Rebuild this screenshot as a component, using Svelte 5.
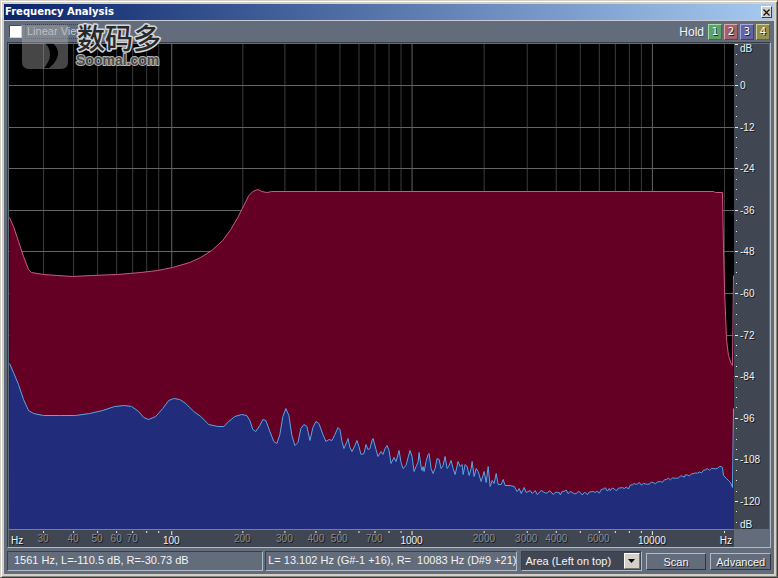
<script lang="ts">
  type Point = [number, number];

  // plot area in its own units, one unit per pixel at the default window size
  const W = 724;
  const H = 485;
  const DB_STEP = 3.4667;

  const snapped: Record<number, number> = { 30: 34, 40: 64, 50: 88, 60: 107, 70: 123, 80: 137, 90: 149, 200: 233, 300: 275 };

  const xOf = (hz: number) => snapped[hz] ?? 162 + 240 * Math.log10(hz / 100);
  const yOf = (db: number) => 41 - db * DB_STEP;
  const pct = (v: number, total: number) => `${((v / total) * 100).toFixed(3)}%`;

  const freqs = [1, 2, 3].flatMap(e => [1, 2, 3, 4, 5, 6, 7, 8, 9].map(m => m * 10 ** e))
    .filter(f => f > 22)
    .concat([10000, 20000]);
  const labelled = [30, 40, 50, 60, 70, 100, 200, 300, 400, 500, 700, 1000, 2000, 3000, 4000, 6000, 10000];
  const isDecade = (f: number) => Number.isInteger(+Math.log10(f).toFixed(6));

  const dbs = Array.from({ length: 11 }, (_, i) => -12 * i);
  const minor = Array.from({ length: 46 }, (_, i) => 9 - 3 * i).filter(d => d % 12 !== 0);

  const right: Point[] = [
    [0, 173], [4, 182], [9, 197], [14, 212], [19, 225], [22, 228], [34, 230], [48, 231], [63, 232], [82, 231],
    [108, 230], [131, 228], [148, 226], [163, 223], [180, 218], [191, 213], [202, 206], [213, 196], [221, 185],
    [228, 173], [234, 161], [239, 151], [243, 147], [248, 145], [252, 147], [257, 148], [262, 147],
    [703, 147], [705, 148], [712, 148], [713, 204], [714, 244], [716, 295], [718, 311], [721, 320], [722, 321], [723, 231]
  ];

  const left: Point[] = [
    [0, 319], [4, 328], [9, 340], [14, 355], [19, 366], [24, 369], [34, 371], [50, 371], [66, 371], [80, 369],
    [93, 366], [105, 362], [115, 361], [122, 362], [129, 367], [134, 373], [139, 375], [146, 372], [153, 364],
    [159, 356], [164, 354], [170, 355], [176, 359], [184, 367], [191, 372], [199, 380], [208, 382], [214, 382],
    [219, 377], [225, 372], [232, 370], [237, 371], [240, 376], [243, 385], [246, 387], [250, 381], [253, 375],
    [256, 376], [260, 387], [264, 397], [267, 399], [270, 390], [273, 372], [276, 364], [279, 371], [282, 391],
    [285, 401], [288, 398], [291, 384], [294, 380], [297, 382], [300, 396], [303, 383], [306, 377], [309, 379],
    [313, 390], [316, 397], [319, 395], [322, 396], [325, 390], [328, 383], [330, 385], [332, 397], [334, 404],
    [337, 397], [338, 394], [340, 403], [342, 407], [345, 401], [347, 396], [349, 402], [351, 410], [354, 409],
    [356, 400], [358, 405], [360, 404], [362, 396], [363, 394], [366, 405], [368, 412], [371, 407], [373, 410],
    [375, 404], [377, 401], [379, 406], [381, 419], [384, 413], [386, 417], [389, 406], [391, 418], [393, 424],
    [396, 421], [398, 413], [400, 406], [402, 412], [404, 427], [406, 422], [408, 418], [409, 408], [411, 422],
    [412, 426], [413, 422], [414, 427], [416, 417], [418, 410], [419, 409], [421, 424], [423, 429], [425, 424],
    [427, 414], [429, 415], [431, 424], [433, 421], [435, 412], [437, 424], [439, 421], [441, 416], [443, 424],
    [445, 430], [448, 417], [450, 422], [452, 420], [453, 430], [455, 420], [457, 422], [459, 431], [461, 424],
    [462, 417], [464, 432], [466, 424], [468, 427], [471, 437], [474, 427], [476, 438], [478, 422], [480, 442],
    [482, 436], [484, 439], [486, 429], [488, 440], [491, 440], [493, 435], [495, 441], [500, 441], [504, 442],
    [507, 447], [509, 444], [511, 449], [514, 443], [516, 448], [520, 446], [522, 449], [525, 446], [527, 450]
  ];

  // the noise floor: slow drift with a small, repeatable jitter on top
  const floor: Point[] = [[529, 447], [550, 448], [575, 448], [600, 445], [625, 441], [650, 437], [675, 431], [695, 426], [712, 422]];
  const jitter = [0, -1, 1, 0, 2, -1, 0, 1, -2, 1, 0, -1, 0, 2, 0, 1, -1];
  for (let s = 0; s < floor.length - 1; s++) {
    const [x0, y0] = floor[s];
    const [x1, y1] = floor[s + 1];
    for (let x = x0; x < x1; x += 2) {
      const amp = x < 630 ? 1.2 : 0.7;
      left.push([x, y0 + ((y1 - y0) * (x - x0)) / (x1 - x0) + amp * jitter[((x * 7) >> 1) % jitter.length]]);
    }
  }
  left.push([712, 423], [713, 431], [716, 434], [718, 436], [720, 438], [722, 443], [723, 364]);

  const line = (pts: Point[]) => "M" + pts.map(([x, y]) => `${x + 0.5} ${(y + 0.5).toFixed(1)}`).join("L");
  const area = (pts: Point[]) => `${line(pts)}L${W} ${H}L0 ${H}Z`;

  let linear = $state(false);
  let view = $state("Area (Left on top)");
  let held = $state<number | null>(null);
</script>

<main class="window">
  <header class="title">
    <h1>Frequency Analysis</h1>
    <button class="close" aria-label="Close">
      <svg width="7" height="7" viewBox="0 0 7 7" aria-hidden="true"><path d="M0.500 0.500L6.500 6.500M6.500 0.500L0.500 6.500" stroke="#111" stroke-width="1.300" /></svg>
    </button>
  </header>

  <div class="body">
    <div class="toolbar">
      <label class="linear"><input type="checkbox" bind:checked={linear} /><span>Linear View</span></label>
      <div class="hold">
        <span>Hold</span>
        {#each [1, 2, 3, 4] as n}
          <button class="slot s{n}" aria-pressed={held === n} onclick={() => (held = n)}>{n}</button>
        {/each}
      </div>
      <div class="watermark">
        <svg width="146" height="52" viewBox="0 0 146 52" role="img" aria-label="Soomal.com">
          <path class="badge" fill-rule="evenodd" d="M0 3H46V40Q46 47 39 47H7Q0 47 0 40ZM23 21H31Q37 27 36 33Q34 41 27 46H22Q28 39 28 33Q28 26 23 21Z" />
          <text class="cjk" x="55" y="27">数码多</text>
          <text class="latin" x="54" y="43">Soomal.com</text>
        </svg>
      </div>
    </div>

    <div class="graph">
      <svg class="plot" viewBox="0 0 {W} {H}" preserveAspectRatio="none" role="img" aria-label="Frequency spectrum">
        {#each freqs as f}
          <rect class={isDecade(f) ? "grid major" : "grid"} x={Math.round(xOf(f))} y="0" width="1" height={H} />
        {/each}
        {#each dbs as d}
          <rect class="grid major" x="0" y={Math.round(yOf(d))} width={W} height="1" />
        {/each}
        <path class="right-fill" d={area(right)} />
        <path class="right-line" d={line(right)} />
        <path class="left-fill" d={area(left)} />
        <path class="left-line" d={line(left)} />
      </svg>

      <svg class="db-axis" aria-hidden="true">
        {#each minor as d}
          <rect class="tick" x="2" y={pct(Math.round(yOf(d)), H)} width="1" height="1" />
        {/each}
        <rect class="tick" x="1" y="0" width="3" height="1" />
        <text x="6" y="8">dB</text>
        {#each dbs as d}
          <rect class="tick" x="1" y={pct(Math.round(yOf(d)), H)} width="3" height="1" />
          <text x="6" y={pct(Math.round(yOf(d)) + 4, H)}>{d}</text>
        {/each}
        <text x="6" y={pct(484, H)}>dB</text>
      </svg>

      <svg class="hz-axis" aria-hidden="true">
        <text x="2" y="14">Hz</text>
        {#each freqs as f}
          <rect class="tick" x={pct(Math.round(xOf(f)), W)} y="1" width="1" height={isDecade(f) ? 4 : 2} />
        {/each}
        {#each labelled as f}
          <text class={isDecade(f) ? "mid" : "mid dim"} x={pct(xOf(f), W)} y={isDecade(f) ? 14 : 12}>{f}</text>
        {/each}
        <text class="end" x={pct(722, W)} y="14">Hz</text>
      </svg>
    </div>

    <footer class="status">
      <output class="field cursor">1561 Hz, L=-110.5 dB, R=-30.73 dB</output>
      <output class="field peak">L= 13.102 Hz (G#-1 +16), R=&nbsp; 10083 Hz (D#9 +21)</output>
      <div class="picker">
        <select bind:value={view} aria-label="Display style">
          <option>Area (Left on top)</option>
          <option>Area (Right on top)</option>
          <option>Lines</option>
          <option>Bars</option>
        </select>
        <span class="arrow"><svg width="7" height="4" viewBox="0 0 7 4" aria-hidden="true"><path d="M0 0h7L3.500 4z" /></svg></span>
      </div>
      <button class="action scan">Scan</button>
      <button class="action adv">Advanced</button>
    </footer>
  </div>
</main>

<style>
  :global(body) { margin: 0; background: #d6d3ca; }

  .window {
    box-sizing: border-box;
    border: 1px solid;
    border-color: #d4d0c8 #45433f #45433f #d4d0c8;
    padding: 3px;
    background: #d4d0c8;
    box-shadow: inset 1px 1px #fff, inset -1px -1px #85827c;
    font-family: "Liberation Sans", Arial, sans-serif;
    font-size: 11px;
    color: #f2f4f8;
  }

  .title {
    display: flex;
    align-items: center;
    justify-content: space-between;
    height: 16px;
    padding: 0 2px 0 1px;
    background: linear-gradient(90deg, #0a246a, #a6caf0);
  }
  h1 {
    margin: 0;
    font: bold 10px/16px "DejaVu Sans", Verdana, sans-serif;
    color: #fff;
  }
  .close {
    display: grid;
    place-items: center;
    width: 11px;
    height: 12px;
    padding: 0;
    border: 1px solid;
    border-color: #fff #404040 #404040 #fff;
    background: #d4d0c8;
  }

  .body {
    padding: 0 3px 3px;
    border-top: 1px solid #c5cad4;
    background: #636c7b;
  }

  .toolbar {
    position: relative;
    display: flex;
    align-items: center;
    justify-content: space-between;
    height: 21px;
    padding: 0 1px 0 2px;
  }
  .linear { display: flex; align-items: center; gap: 4px; font-size: 11px; color: #c6cad0; }
  .linear input {
    appearance: none;
    box-sizing: border-box;
    width: 13px;
    height: 13px;
    margin: 0;
    border: 1px solid;
    border-color: #444b58 #d0d0d0 #d0d0d0 #444b58;
    background: #fff;
  }
  .linear input:checked { background: radial-gradient(#222 40%, #fff 45%); }
  .linear span { padding: 0 1px; outline: 1px dotted #3a404b; line-height: 13px; }

  .hold { display: flex; align-items: center; gap: 2px; font-size: 12px; }
  .hold span { margin-right: 2px; text-shadow: 1px 1px #4b5260; }
  .slot {
    box-sizing: border-box;
    width: 14px;
    height: 16px;
    padding: 0;
    border: 1px solid;
    font: 10px/14px "DejaVu Sans", sans-serif;
    color: #fff;
    text-shadow: 1px 1px #222;
  }
  .s1 { background: #5da265; border-color: #a5dcab #37703d #37703d #a5dcab; }
  .s2 { background: #a3616a; border-color: #dca7ae #723b43 #723b43 #dca7ae; }
  .s3 { background: #6264a4; border-color: #a8aade #3b3d78 #3b3d78 #a8aade; }
  .s4 { background: #93904f; border-color: #d3d095 #65622d #65622d #d3d095; }

  .watermark { position: absolute; top: 1px; left: 15px; height: 52px; pointer-events: none; }
  .badge { fill: #b0b0b0; fill-opacity: 0.4; }
  .cjk, .latin { paint-order: stroke; stroke-linejoin: round; fill: #28292b; stroke: #d4d6d8; stroke-width: 3px; }
  .cjk { font: 500 28px "Noto Sans CJK SC", sans-serif; }
  .latin { font: bold 14px "Liberation Sans", sans-serif; fill: #4a4a4a; stroke: #b4b4b4; stroke-width: 2px; }

  .graph {
    display: grid;
    grid-template-columns: 1fr 35px;
    grid-template-rows: 485px 18px;
    padding: 1px 1px 0;
    border: 1px solid;
    border-color: #343a46 #b0bac8 #b0bac8 #343a46;
  }
  .plot { display: block; width: 100%; height: 100%; background: #000; }
  .grid { fill: #3c3c3c; }
  .major { fill: #646464; }
  .right-fill { fill: #640024; }
  .left-fill { fill: #212d7b; }
  .right-line, .left-line { fill: none; stroke-width: 1px; vector-effect: non-scaling-stroke; shape-rendering: crispEdges; }
  .right-line { stroke: #cf5589; }
  .left-line { stroke: #5aa5e6; }

  .db-axis, .hz-axis { display: block; width: 100%; height: 100%; background: #414752; }
  .hz-axis { border-top: 1px solid #7b8088; box-sizing: border-box; }
  .tick { fill: #e8eaee; }
  .db-axis text, .hz-axis text { font-size: 10px; fill: #f0f2f5; text-shadow: 1px 1px #15171b; }
  .mid { text-anchor: middle; }
  .end { text-anchor: end; }
  .hz-axis .dim { fill: #868a90; }

  .status { display: flex; gap: 4px; padding-top: 3px; }
  .field, .picker {
    box-sizing: border-box;
    height: 20px;
    border: 1px solid;
    border-color: #383e4a #b0bac8 #b0bac8 #383e4a;
    white-space: nowrap;
    overflow: hidden;
  }
  .field { padding-left: 6px; font-size: 11px; line-height: 17px; }
  .cursor { flex: 254 1 0; margin-right: -2px; }
  .peak { flex: 254 1 0; padding-left: 2px; }
  .picker { display: flex; flex: 119 1 0; padding: 1px; background: #414752; }
  select {
    appearance: none;
    flex: 1;
    min-width: 0;
    padding: 0 2px;
    border: 0;
    background: none;
    color: #f2f4f8;
    font: 11px "Liberation Sans", Arial, sans-serif;
  }
  .arrow {
    display: grid;
    place-items: center;
    width: 14px;
    border: 1px solid;
    border-color: #fff #77756f #77756f #fff;
    background: #d4d0c8;
    pointer-events: none;
  }
  .action {
    box-sizing: border-box;
    height: 17px;
    margin-top: 2px;
    padding: 0;
    border: 1px solid;
    border-color: #b0bac8 #30353f #30353f #b0bac8;
    background: #636c7b;
    color: #f2f4f8;
    font: 11px "Liberation Sans", Arial, sans-serif;
    text-shadow: 1px 1px #20242c;
  }
  .scan, .adv { flex: 60 1 0; }
</style>
